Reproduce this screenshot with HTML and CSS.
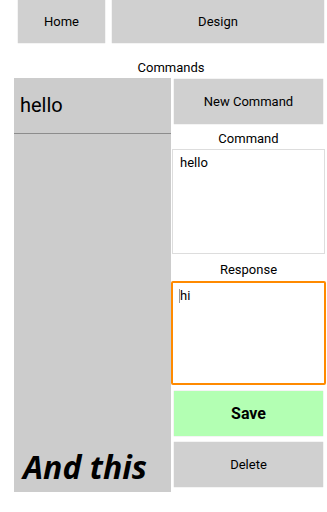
FILE: index.html
```html
<!DOCTYPE html>
<html lang="en">
<head>
    <meta charset="UTF-8">
    <meta name="viewport" content="width=device-width, initial-scale=1.0">
    <title>Commands</title>
    <link rel="stylesheet" href="styles.css">
</head>
<body>
    <div class="nav">
        <button class="nav-home">Home</button>
        <button class="nav-design">Design</button>
    </div>

    <div class="title">Commands</div>

    <div class="main">
        <div class="list">
            <div class="list-item">hello</div>
            <div class="list-footer">And this</div>
        </div>

        <div class="editor">
            <button class="btn btn-new">New Command</button>
            <div class="label label-command">Command</div>
            <div class="field">hello</div>
            <div class="label label-response">Response</div>
            <div class="field field-focus"><span class="caret"></span>hi</div>
            <button class="btn btn-save">Save</button>
            <button class="btn btn-delete">Delete</button>
        </div>
    </div>
</body>
</html>
```

FILE: styles.css
```css
body {
    margin: 0;
    width: 327px;
    font-family: Roboto, "Noto Sans", Arial, sans-serif;
    color: black;
    background: white;
}
button {
    font-family: inherit;
    border: none;
    background-color: #d0d0d0;
    box-shadow: 0 0 1px rgba(0, 0, 0, 0.25);
    color: black;
    font-size: 13px;
    padding: 0;
}
.nav {
    display: flex;
    gap: 7px;
    padding-left: 18px;
}
.nav button {
    height: 43px;
}
.nav-home {
    width: 87px;
}
.nav-design {
    width: 212px;
}
.title {
    text-align: center;
    font-size: 13px;
    line-height: 16px;
    margin-top: 17px;
    margin-bottom: 2px;
    padding-left: 15px;
}
.main {
    display: flex;
    padding-left: 14px;
}
.list {
    width: 157px;
    height: 414px;
    background-color: #cccccc;
    display: flex;
    flex-direction: column;
}
.list-item {
    height: 55px;
    border-bottom: 1px solid #8c8c8c;
    font-size: 20px;
    line-height: 55px;
    padding-left: 6px;
}
.list-footer {
    margin-top: auto;
    font-family: "Open Sans", sans-serif;
    font-weight: bold;
    font-style: italic;
    font-size: 32px;
    line-height: 40px;
    padding-left: 9px;
    padding-bottom: 5px;
}
.editor {
    width: 155px;
    display: flex;
    flex-direction: column;
}
.btn {
    height: 45px;
    margin: 0 3px;
}
.btn-new {
    margin-top: 1px;
}
.btn-save {
    margin-top: 6px;
    background-color: #b3ffb3;
    font-weight: bold;
    font-size: 16px;
}
.btn-delete {
    margin-top: 6px;
}
.label {
    text-align: center;
    font-size: 13px;
    line-height: 16px;
}
.label-command {
    margin-top: 7px;
    margin-bottom: 2px;
}
.label-response {
    margin-top: 8px;
    margin-bottom: 3px;
}
.field {
    height: 105px;
    margin: 0 1px;
    border: 1px solid #dddddd;
    box-sizing: border-box;
    font-size: 13px;
    padding: 5px 7px;
    background: white;
}
.field-focus {
    height: 104px;
    margin: 0;
    border: 2px solid #ff8a00;
    border-radius: 2px;
    padding: 5px 7px;
}
.caret {
    display: inline-block;
    width: 1px;
    height: 14px;
    background-color: #999999;
    vertical-align: -3px;
    margin-left: -1px;
}
```
